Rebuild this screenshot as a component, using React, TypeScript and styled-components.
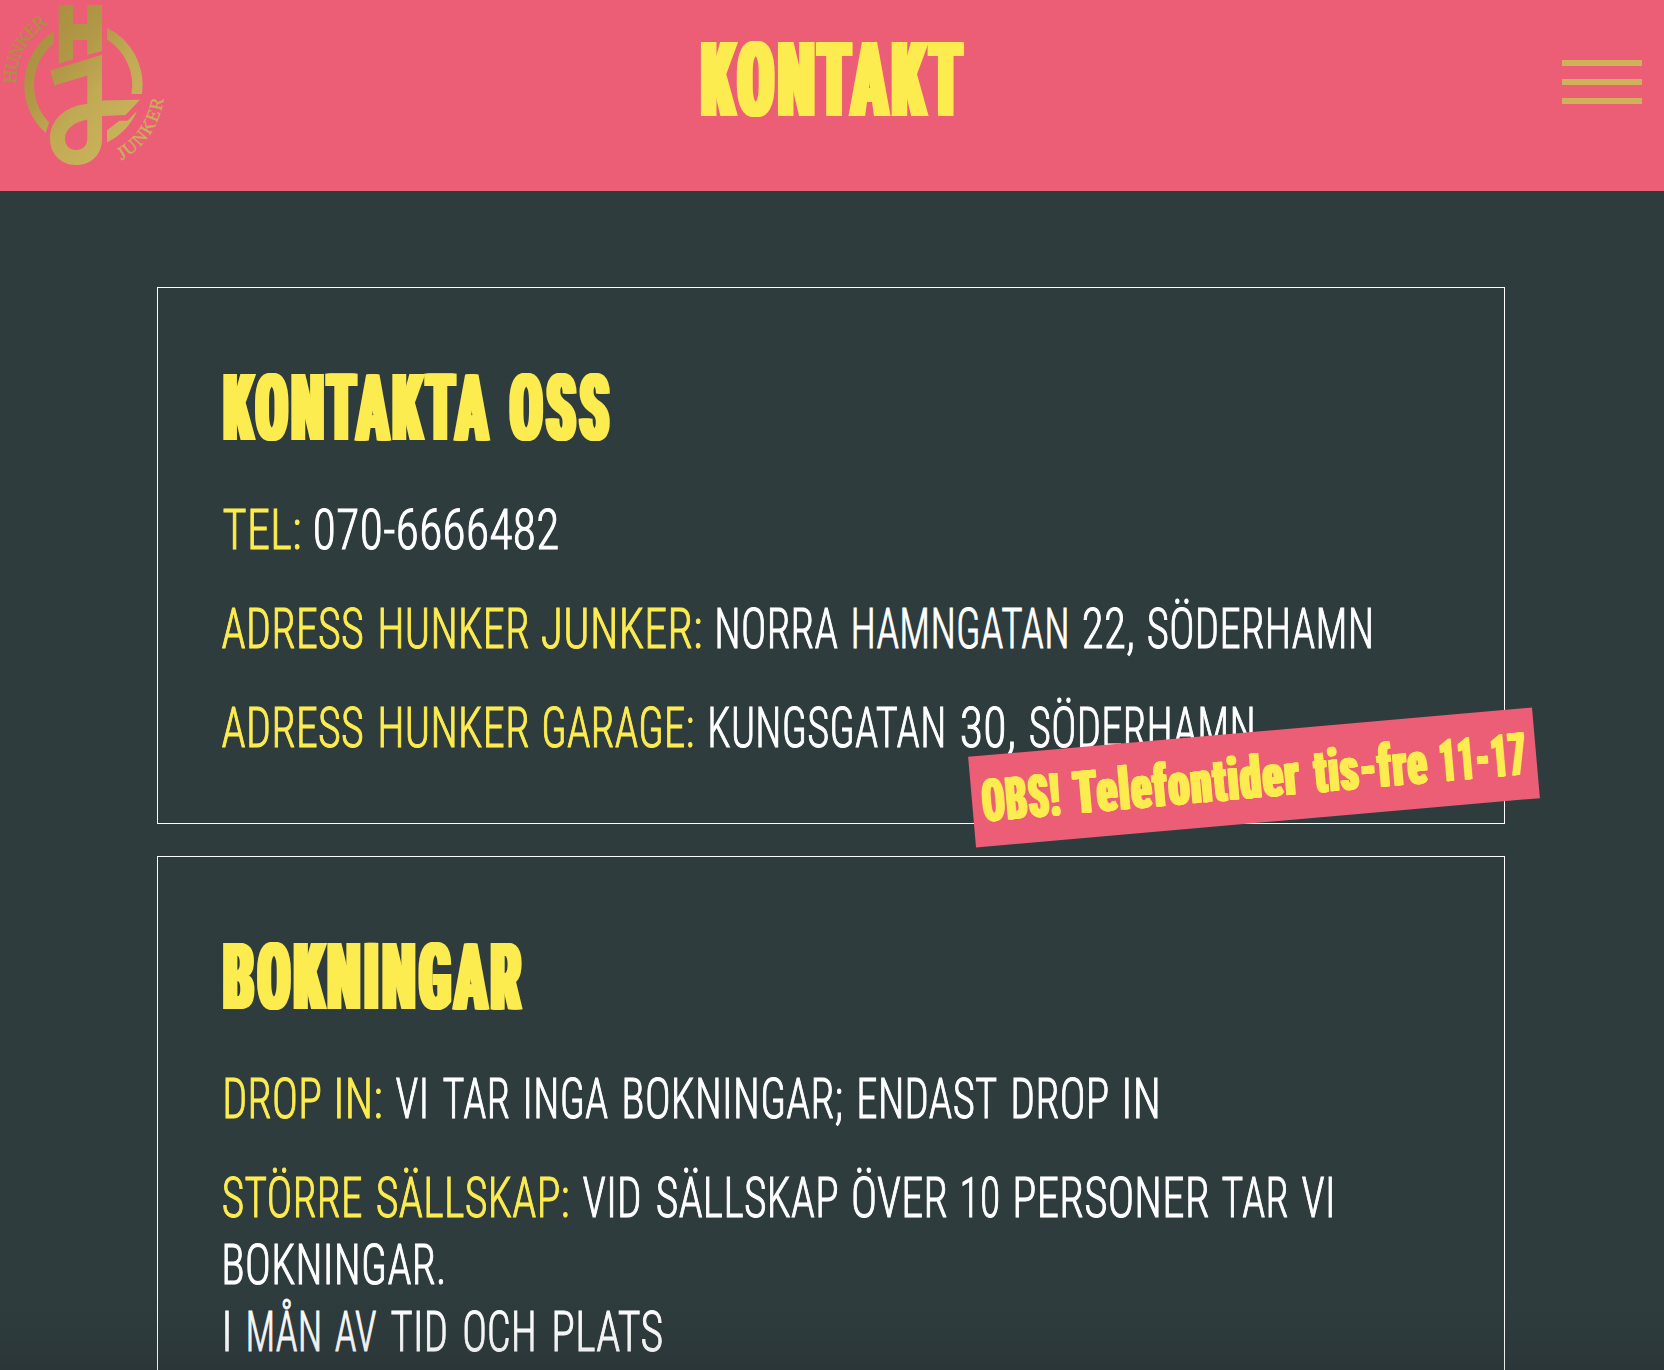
import React, { useLayoutEffect, useRef, useState } from "react";
import styled, { createGlobalStyle } from "styled-components";

const colors = {
  pink: "#eb5e76",
  slate: "#2f3c3e",
  yellow: "#fdec4f",
  gold: "#cfb15a",
  white: "#ffffff",
};

const GlobalStyle = createGlobalStyle`
  body { margin: 0; background: ${colors.slate}; }
  *, *::before, *::after { box-sizing: border-box; }
  h1, h2, p { margin: 0; font-weight: inherit; }
`;

const Page = styled.div`
  position: relative;
  width: 100%;
  height: 1370px;
  overflow: hidden;
  background: ${colors.slate};
  font-family: Roboto, "Liberation Sans", sans-serif;
  font-stretch: 75%;
`;

const Header = styled.header`
  display: grid;
  grid-template-columns: 1fr auto 1fr;
  height: 191px;
  background: ${colors.pink};
`;

const LogoLink = styled.a`
  display: block;
  width: 180px;
  height: 180px;
`;

const MenuButton = styled.button`
  display: flex;
  flex-direction: column;
  gap: 13px;
  justify-self: end;
  align-self: start;
  margin: 60px 22px 0 0;
  padding: 0;
  border: 0;
  background: none;
`;

const MenuBar = styled.span`
  width: 80px;
  height: 6px;
  background: ${colors.gold};
`;

const Title = styled.h1`
  display: flex;
  margin-top: 20px;
  height: 122px;
  line-height: 122px;
  color: ${colors.yellow};
`;

const Main = styled.main`
  display: flex;
  flex-direction: column;
  gap: 32px;
  padding: 96px 159px 0 157px;
`;

const Card = styled.section<{ $height: number }>`
  position: relative;
  flex: none;
  height: ${(p) => p.$height}px;
  padding: 64px;
  border: 1px solid ${colors.white};
`;

const Heading = styled.h2`
  display: flex;
  height: 112px;
  margin-bottom: 33px;
  line-height: 113px;
  color: ${colors.yellow};
`;

const Paragraph = styled.p`
  color: ${colors.white};
  & + & { margin-top: 32px; }
`;

const Line = styled.span`
  display: flex;
  height: 67px;
  line-height: 67px;
`;

const Banner = styled.div`
  position: absolute;
  left: 813.4px;
  top: 444.1px;
  display: flex;
  align-items: center;
  width: 565.5px;
  height: 90.6px;
  padding-top: 1px;
  background: ${colors.pink};
  color: ${colors.yellow};
  transform: rotate(-5deg);
`;

const BottomShade = styled.div`
  position: absolute;
  inset: auto 0 0 0;
  height: 80px;
  background: linear-gradient(to bottom, rgba(0, 0, 0, 0), rgba(0, 0, 0, 0.035) 50%, rgba(0, 0, 0, 0.1));
  pointer-events: none;
`;

const WordBox = styled.span<{ $gap: number; $width: number; $label?: boolean }>`
  flex: none;
  display: block;
  width: ${(p) => p.$width}px;
  margin-left: ${(p) => p.$gap}px;
  white-space: nowrap;
  ${(p) => p.$label && `color: ${colors.yellow};`}
`;

type Face = { size: number; weight: number; fat: number; stroke: number; tracking: number };

const Glyphs = styled.span<{ $face: Face }>`
  display: inline-block;
  font-size: ${(p) => p.$face.size}px;
  font-weight: ${(p) => p.$face.weight};
  letter-spacing: ${(p) => p.$face.tracking}px;
  transform-origin: 0 50%;
  ${({ $face }) =>
    $face.stroke > 0 && `-webkit-text-stroke: ${$face.stroke}px currentColor;`}
  ${({ $face }) =>
    $face.fat > 0 &&
    `text-shadow: ${[-1, -0.5, 0.5, 1].map((k) => `${k * $face.fat}px 0 currentColor`).join(", ")};`}
`;

const faces: Record<string, Face> = {
  title: { size: 103.6, weight: 900, fat: 4.5, stroke: 0, tracking: 5.6 },
  heading: { size: 91.8, weight: 900, fat: 4, stroke: 0, tracking: 5 },
  body: { size: 55.8, weight: 300, fat: 0, stroke: 1, tracking: 0.4 },
  banner: { size: 59.3, weight: 900, fat: 2, stroke: 0, tracking: 1.8 },
};

type WordSpec = { t: string; w: number; gap?: number; label?: boolean };

// Condenses a word so that its ink fills exactly the given width.
function Word({ t, w, gap = 0, label, face }: WordSpec & { face: Face }) {
  const ref = useRef<HTMLSpanElement>(null);
  const [fit, setFit] = useState({ shift: 0, scale: 1 });
  useLayoutEffect(() => {
    const ctx = document.createElement("canvas").getContext("2d");
    if (!ctx || !ref.current) return;
    ctx.font = `${face.weight} condensed ${face.size}px Roboto`;
    (ctx as any).letterSpacing = `${face.tracking}px`;
    const m = ctx.measureText(t);
    const advance = ref.current.offsetWidth;
    const bleed = face.fat + face.stroke / 2;
    const right = advance - (m.width - m.actualBoundingBoxRight) + bleed;
    const left = -m.actualBoundingBoxLeft - bleed;
    const scale = w / (right - left);
    setFit({ shift: -left * scale, scale });
  }, [t, w, face]);
  return (
    <WordBox $gap={gap} $width={w} $label={label}>
      <Glyphs
        ref={ref}
        $face={face}
        style={{ transform: `translateX(${fit.shift}px) scaleX(${fit.scale})` }}
      >
        {t}
      </Glyphs>
    </WordBox>
  );
}

const Words = ({ words, face }: { words: WordSpec[]; face: Face }) => (
  <>
    {words.map((word, i) => (
      <Word key={i} {...word} face={face} />
    ))}
  </>
);

const contactRows: WordSpec[][][] = [
  [[
    { t: "TEL:", gap: 0.6, w: 77.4, label: true },
    { t: "070-6666482", gap: 15.2, w: 242.8 },
  ]],
  [[
    { t: "ADRESS", gap: -0.2, w: 140.8, label: true },
    { t: "HUNKER", gap: 17.2, w: 148.6, label: true },
    { t: "JUNKER:", gap: 13.3, w: 158.9, label: true },
    { t: "NORRA", gap: 16.8, w: 120.7 },
    { t: "HAMNGATAN", gap: 14.5, w: 213.5 },
    { t: "22,", gap: 16.6, w: 49.9 },
    { t: "SÖDERHAMN", gap: 15.8, w: 223 },
  ]],
  [[
    { t: "ADRESS", gap: -0.2, w: 140.8, label: true },
    { t: "HUNKER", gap: 17.2, w: 148.6, label: true },
    { t: "GARAGE:", gap: 15.3, w: 149.2, label: true },
    { t: "KUNGSGATAN", gap: 17.5, w: 233.3 },
    { t: "30,", gap: 17.3, w: 53 },
    { t: "SÖDERHAMN", gap: 15.8, w: 222.6 },
  ]],
];

const bookingRows: WordSpec[][][] = [
  [[
    { t: "DROP", gap: 2.8, w: 95.7, label: true },
    { t: "IN:", gap: 17, w: 44, label: true },
    { t: "VI", gap: 14.6, w: 30.2 },
    { t: "TAR", gap: 16.9, w: 65.8 },
    { t: "INGA", gap: 16.9, w: 81.9 },
    { t: "BOKNINGAR;", gap: 16, w: 217.5 },
    { t: "ENDAST", gap: 17.4, w: 137.7 },
    { t: "DROP", gap: 16.9, w: 94.9 },
    { t: "IN", gap: 16.9, w: 32.9 },
  ]],
  [
    [
      { t: "STÖRRE", gap: 0.9, w: 138.9, label: true },
      { t: "SÄLLSKAP:", gap: 15, w: 190.9, label: true },
      { t: "VID", gap: 15.2, w: 57 },
      { t: "SÄLLSKAP", gap: 16.8, w: 180.7 },
      { t: "ÖVER", gap: 15.9, w: 94.3 },
      { t: "10", gap: 14, w: 36.1 },
      { t: "PERSONER", gap: 17.1, w: 193.3 },
      { t: "TAR", gap: 14.1, w: 65.4 },
      { t: "VI", gap: 14.8, w: 30.6 },
    ],
    [{ t: "BOKNINGAR.", gap: 2.4, w: 219.8 }],
    [
      { t: "I", gap: 3, w: 4 },
      { t: "MÅN", gap: 18.9, w: 71.2 },
      { t: "AV", gap: 15.8, w: 40.8 },
      { t: "TID", gap: 15.3, w: 55.6 },
      { t: "OCH", gap: 17.6, w: 69.9 },
      { t: "PLATS", gap: 19.6, w: 108 },
    ],
  ],
];

const Rows = ({ rows }: { rows: WordSpec[][][] }) => (
  <>
    {rows.map((lines, i) => (
      <Paragraph key={i}>
        {lines.map((words, j) => (
          <Line key={j}>
            <Words words={words} face={faces.body} />
          </Line>
        ))}
      </Paragraph>
    ))}
  </>
);

const Logo = () => (
  <svg width="180" height="180" viewBox="0 0 180 180" aria-label="Hunker Junker">
    <defs>
      <linearGradient id="gold" gradientUnits="userSpaceOnUse" x1="30" y1="40" x2="125" y2="125">
        <stop offset="0" stopColor="#aa9040" />
        <stop offset="0.35" stopColor="#b19947" />
        <stop offset="0.65" stopColor="#c1aa54" />
        <stop offset="1" stopColor="#c8b159" />
      </linearGradient>
      <path id="arcTop" d="M16.3 83.5A68 68 0 0 1 50 23" />
      <path id="arcBottom" d="M121.5 160.5A83 83 0 0 0 164 95" />
    </defs>
    <g fill="url(#gold)">
      <path d="M58.7 5H73V24H87.3V5H102V51L87.3 55V40H73V59.3L58.7 63.7Z" />
      <path
        fillRule="evenodd"
        d="M50.3 70.5L102 54.7V100.5L140 99.7L125.5 115L102 116V139C102 155 91 165 76 165C61 165 50 154 50 138.5C50 121 63.5 106.5 87.3 103.8V75.5L54.3 85.5ZM87.3 119.5C74 122 65 129 65 138.5C65 145.500 69.500 150 76 150C82.500 150 87.300 145.500 87.300 139Z"
      />
      <path d="M53.7 31.3V43.3A54 54 0 0 0 49 122.5L45.7 133A64 64 0 0 1 53.7 31.3Z" />
      <path d="M107 27.7A63.5 63.5 0 0 1 142 94H131.5A54 54 0 0 0 107 39.5Z" />
      <path d="M107 130.3L119.5 120.7H127.5L137 111C131 125 120 136.5 107 142.3Z" />
      <g
        fontFamily="'Liberation Serif', serif"
        fontSize="18.5"
        stroke="url(#gold)"
        strokeWidth="0.3"
      >
        <text textLength="71">
          <textPath href="#arcTop">HUNKER</textPath>
        </text>
        <text textLength="77">
          <textPath href="#arcBottom">JUNKER</textPath>
        </text>
      </g>
    </g>
  </svg>
);

export default function App() {
  return (
    <Page>
      <GlobalStyle />
      <Header>
        <LogoLink>
          <Logo />
        </LogoLink>
        <Title>
          <Words words={[{ t: "KONTAKT", gap: 0.6, w: 263.2 }]} face={faces.title} />
        </Title>
        <MenuButton aria-label="Meny">
          <MenuBar />
          <MenuBar />
          <MenuBar />
        </MenuButton>
      </Header>
      <Main>
        <Card $height={537}>
          <Heading>
            <Words
              words={[
                { t: "KONTAKTA", gap: 1, w: 267.7 },
                { t: "OSS", gap: 18, w: 101.6 },
              ]}
              face={faces.heading}
            />
          </Heading>
          <Rows rows={contactRows} />
          <Banner>
            <Words
              words={[
                { t: "OBS!", gap: 9.5, w: 78 },
                { t: "Telefontider", gap: 13.2, w: 228.3 },
                { t: "tis-fre", gap: 13.2, w: 115.4 },
                { t: "11-17", gap: 12.4, w: 85.5 },
              ]}
              face={faces.banner}
            />
          </Banner>
        </Card>
        <Card $height={640}>
          <Heading>
            <Words words={[{ t: "BOKNINGAR", gap: 1, w: 299.8 }]} face={faces.heading} />
          </Heading>
          <Rows rows={bookingRows} />
        </Card>
      </Main>
      <BottomShade />
    </Page>
  );
}
